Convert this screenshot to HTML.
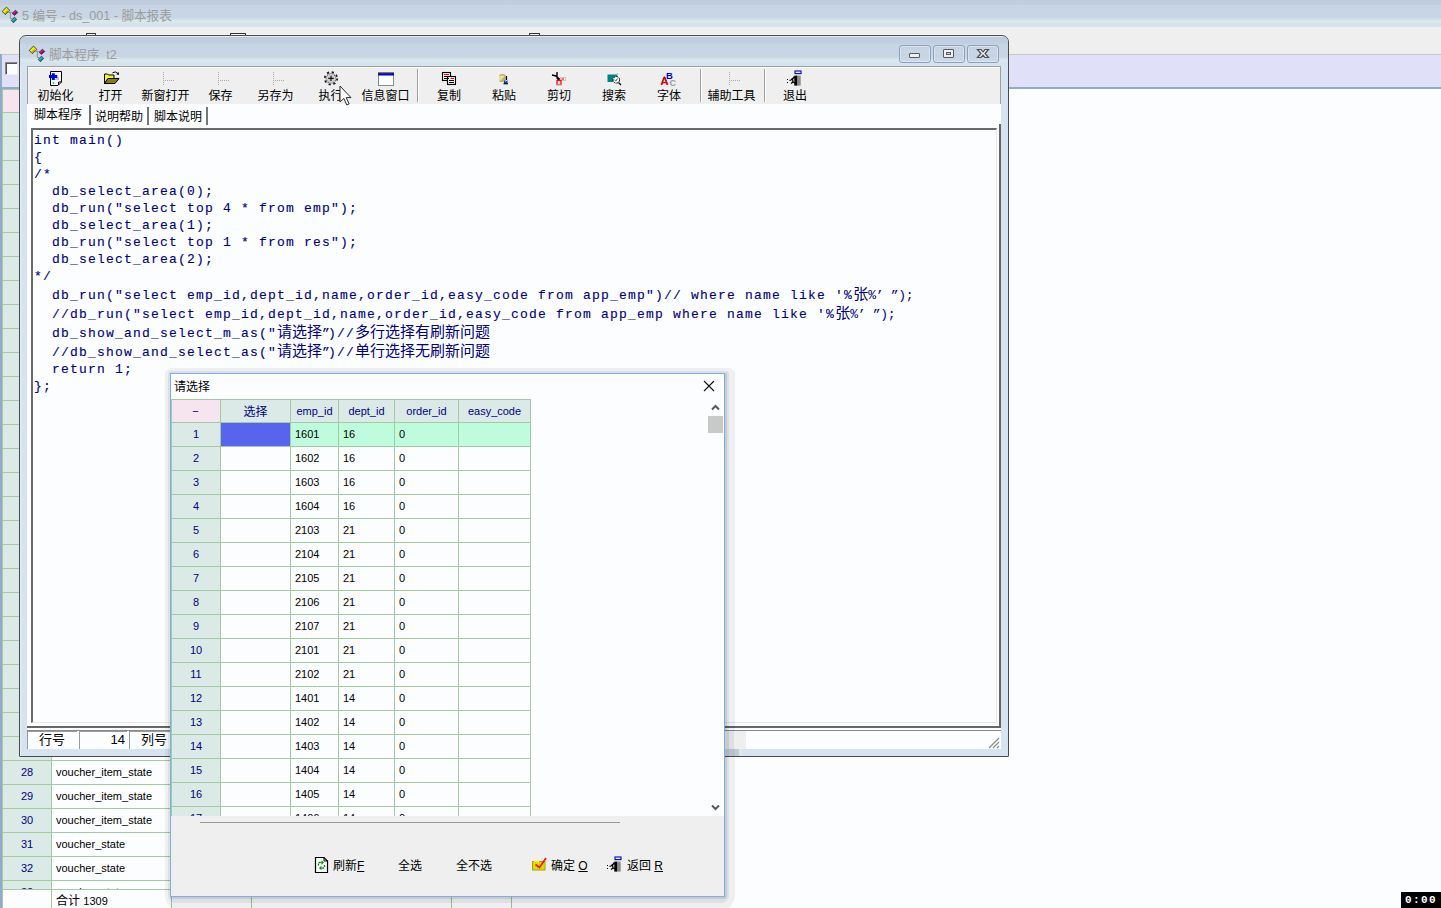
<!DOCTYPE html>
<html lang="zh"><head><meta charset="utf-8"><title>脚本报表</title>
<style>
*{box-sizing:border-box;margin:0;padding:0}
html,body{width:1441px;height:908px;overflow:hidden;background:#fcfdfe}
body{position:relative;font-family:"Liberation Sans","Noto Sans CJK SC",sans-serif;font-size:12px;color:#000}
.a{position:absolute}
.t{position:absolute;white-space:nowrap;line-height:14px;height:14px}
.c{text-align:center}
.nv{color:#000080}
.mono{font-family:"Liberation Mono","Noto Sans CJK SC",monospace}
.code{position:absolute;left:34px;white-space:pre;font-family:"Liberation Mono","Noto Sans CJK SC",monospace;font-size:13px;line-height:17px;height:17px;color:#000080;letter-spacing:1.2px;-webkit-text-stroke:0.12px #000080;margin-top:1px}
.cj{line-height:0;font-size:15px;letter-spacing:0;-webkit-text-stroke:0}
.sh{line-height:0;letter-spacing:-0.3px;-webkit-text-stroke:0}
.hl{position:absolute;height:1px;background:#a4caa2}
.vl{position:absolute;width:1px;background:#a4caa2}
.lat{font-size:11px}
</style></head><body>

<div class="a" id="mtitle" style="left:0;top:0;width:1441px;height:27px;background:linear-gradient(#bfcddd 0,#c1cedf 5px,#c8d5e4 5px,#c8d5e4 18px,#d0dceb 18px,#d0dceb 20px,#dbe8e8 20px,#dbe8e8 23px,#d5e2f0 23px)"></div>
<div class="t" style="left:22px;top:8px;font-size:12.6px;line-height:16px;height:16px;color:#9c9c9c">5 编号 - ds_001 - 脚本报表</div>
<svg class="a" style="left:0px;top:0px" width="24" height="24" viewBox="0 0 24 24"><path d="M8.5 12.4 H12.3 M10.4 12.4 V18.6 H12.2" stroke="#8e8e8e" stroke-width="1" fill="none"/><path d="M6.5 7.1 L9.8 10.4 L5.4 14.6 L2.2 11.4 Z" fill="#f4f000" stroke="#1a1a40" stroke-width=".8"/><path d="M7.3 10.2 L9.0 11.0 L5.6 14.0 L4.4 13.0 Z" fill="#b0a800"/><path d="M15.5 10.2 L17.8 12.5 L14.4 15.4 L12.1 13.3 Z" fill="#e800d8" stroke="#1a3a1a" stroke-width=".8"/><path d="M16.3 12.0 L17.2 12.6 L14.6 14.8 L13.6 13.9 Z" fill="#a00018"/><path d="M14.4 17.2 L16.7 19.4 L13.4 22.8 L11.3 20.5 Z" fill="#00d0d8" stroke="#3a1a1a" stroke-width=".8"/><path d="M15.2 19.0 L16.0 19.6 L13.6 22.0 L12.8 21.2 Z" fill="#008890"/></svg>
<div class="a" style="left:0;top:27px;width:1441px;height:27px;background:#eeefee"></div>
<div class="a" style="left:86px;top:33px;width:10px;height:2px;z-index:1;border:1px solid #333;border-bottom:none;border-radius:1px 1px 0 0;background:#f4f4f4"></div>
<div class="a" style="left:230px;top:33px;width:16px;height:2px;z-index:1;border:1px solid #333;border-bottom:none;border-radius:1px 1px 0 0;background:#f4f4f4"></div>
<div class="a" style="left:529px;top:33px;width:11px;height:2px;z-index:1;border:1px solid #333;border-bottom:none;border-radius:1px 1px 0 0;background:#f4f4f4"></div>
<div class="a" style="left:314px;top:34px;width:2px;height:1px;background:#333"></div>
<div class="a" style="left:0;top:54px;width:1441px;height:1px;background:#c6c6c6"></div>
<div class="a" style="left:0;top:55px;width:1441px;height:32px;background:#e0e0f8"></div>
<div class="a" style="left:0;top:87px;width:1441px;height:2px;background:#8fabce"></div>
<div class="a" style="left:0;top:54px;width:2px;height:854px;background:#90aacc"></div>
<div class="a" style="left:5px;top:62px;width:13px;height:13px;background:#fcfdfe;border:1px solid #888;border-right-color:#eee;border-bottom-color:#eee;box-shadow:inset 1px 1px 0 #555"></div>
<div class="a" style="left:2px;top:89px;width:49px;height:800px;background:#dbeae7"></div>
<div class="a" style="left:3px;top:90px;width:48px;height:22px;background:#f6e5ef"></div>
<div class="hl" style="left:3px;top:112px;width:509px"></div>
<div class="hl" style="left:3px;top:136px;width:509px"></div>
<div class="hl" style="left:3px;top:160px;width:509px"></div>
<div class="hl" style="left:3px;top:184px;width:509px"></div>
<div class="hl" style="left:3px;top:208px;width:509px"></div>
<div class="hl" style="left:3px;top:232px;width:509px"></div>
<div class="hl" style="left:3px;top:256px;width:509px"></div>
<div class="hl" style="left:3px;top:280px;width:509px"></div>
<div class="hl" style="left:3px;top:304px;width:509px"></div>
<div class="hl" style="left:3px;top:328px;width:509px"></div>
<div class="hl" style="left:3px;top:352px;width:509px"></div>
<div class="hl" style="left:3px;top:376px;width:509px"></div>
<div class="hl" style="left:3px;top:400px;width:509px"></div>
<div class="hl" style="left:3px;top:424px;width:509px"></div>
<div class="hl" style="left:3px;top:448px;width:509px"></div>
<div class="hl" style="left:3px;top:472px;width:509px"></div>
<div class="hl" style="left:3px;top:496px;width:509px"></div>
<div class="hl" style="left:3px;top:520px;width:509px"></div>
<div class="hl" style="left:3px;top:544px;width:509px"></div>
<div class="hl" style="left:3px;top:568px;width:509px"></div>
<div class="hl" style="left:3px;top:592px;width:509px"></div>
<div class="hl" style="left:3px;top:616px;width:509px"></div>
<div class="hl" style="left:3px;top:640px;width:509px"></div>
<div class="hl" style="left:3px;top:664px;width:509px"></div>
<div class="hl" style="left:3px;top:688px;width:509px"></div>
<div class="hl" style="left:3px;top:712px;width:509px"></div>
<div class="hl" style="left:3px;top:736px;width:509px"></div>
<div class="hl" style="left:3px;top:760px;width:509px"></div>
<div class="hl" style="left:3px;top:784px;width:509px"></div>
<div class="hl" style="left:3px;top:808px;width:509px"></div>
<div class="hl" style="left:3px;top:832px;width:509px"></div>
<div class="hl" style="left:3px;top:856px;width:509px"></div>
<div class="hl" style="left:3px;top:880px;width:509px"></div>
<div class="hl" style="left:2px;top:89px;width:510px"></div>
<div class="vl" style="left:2px;top:89px;height:819px"></div>
<div class="vl" style="left:51px;top:89px;height:819px"></div>
<div class="vl" style="left:171px;top:89px;height:819px"></div>
<div class="vl" style="left:251px;top:89px;height:819px"></div>
<div class="vl" style="left:451px;top:89px;height:819px"></div>
<div class="vl" style="left:511px;top:89px;height:819px"></div>
<div class="a" style="left:3px;top:890px;width:48px;height:18px;background:#fcfdfe"></div>
<div class="hl" style="left:3px;top:889px;width:509px"></div>
<div class="a" style="left:3px;top:761px;width:508px;height:23px;overflow:hidden"><div class="t c nv lat" style="left:0;top:4px;width:48px">28</div><div class="t lat" style="left:53px;top:4px">voucher_item_state</div></div>
<div class="a" style="left:3px;top:785px;width:508px;height:23px;overflow:hidden"><div class="t c nv lat" style="left:0;top:4px;width:48px">29</div><div class="t lat" style="left:53px;top:4px">voucher_item_state</div></div>
<div class="a" style="left:3px;top:809px;width:508px;height:23px;overflow:hidden"><div class="t c nv lat" style="left:0;top:4px;width:48px">30</div><div class="t lat" style="left:53px;top:4px">voucher_item_state</div></div>
<div class="a" style="left:3px;top:833px;width:508px;height:23px;overflow:hidden"><div class="t c nv lat" style="left:0;top:4px;width:48px">31</div><div class="t lat" style="left:53px;top:4px">voucher_state</div></div>
<div class="a" style="left:3px;top:857px;width:508px;height:23px;overflow:hidden"><div class="t c nv lat" style="left:0;top:4px;width:48px">32</div><div class="t lat" style="left:53px;top:4px">voucher_state</div></div>
<div class="a" style="left:3px;top:881px;width:508px;height:8px;overflow:hidden"><div class="t c nv lat" style="left:0;top:4px;width:48px">33</div><div class="t lat" style="left:53px;top:4px">voucher_state</div></div>
<div class="t" style="left:56px;top:894px">合计 <span class="lat">1309</span></div>
<div class="a" style="left:24px;top:34px;width:980px;height:1px;background:#f6f7f7"></div>
<div class="a" id="sw" style="left:19px;top:35px;width:990px;height:722px;border:1px solid #4b4b4b;border-radius:7px 7px 1px 1px;background:#d6e3f1;overflow:hidden;box-shadow:inset 1px 1px 0 #e9eef5">
<div class="a" style="left:0;top:1px;width:988px;height:29px;background:linear-gradient(#bccbdc 0,#c3d0df 7px,#c8d5e4 7px,#c8d5e4 20px,#d0dceb 20px,#d0dceb 22px,#dbe8e8 22px,#dbe8e8 25px,#d5e2f0 25px)"></div>
</div>
<div class="t" style="left:49px;top:47px;font-size:12.6px;line-height:16px;height:16px;color:#9c9c9c">脚本程序&nbsp; t2</div>
<svg class="a" style="left:27px;top:39px" width="24" height="24" viewBox="0 0 24 24"><path d="M8.5 12.4 H12.3 M10.4 12.4 V18.6 H12.2" stroke="#8e8e8e" stroke-width="1" fill="none"/><path d="M6.5 7.1 L9.8 10.4 L5.4 14.6 L2.2 11.4 Z" fill="#f4f000" stroke="#1a1a40" stroke-width=".8"/><path d="M7.3 10.2 L9.0 11.0 L5.6 14.0 L4.4 13.0 Z" fill="#b0a800"/><path d="M15.5 10.2 L17.8 12.5 L14.4 15.4 L12.1 13.3 Z" fill="#e800d8" stroke="#1a3a1a" stroke-width=".8"/><path d="M16.3 12.0 L17.2 12.6 L14.6 14.8 L13.6 13.9 Z" fill="#a00018"/><path d="M14.4 17.2 L16.7 19.4 L13.4 22.8 L11.3 20.5 Z" fill="#00d0d8" stroke="#3a1a1a" stroke-width=".8"/><path d="M15.2 19.0 L16.0 19.6 L13.6 22.0 L12.8 21.2 Z" fill="#008890"/></svg>
<div class="a" style="left:899px;top:45px;width:32px;height:18px;border:1px solid #8ea0bf;border-radius:3px;background:linear-gradient(#c4d2e2 0,#c9d6e5 50%,#c3d1e2 50%,#cddae8 100%);box-shadow:inset 0 0 0 1px rgba(255,255,255,.35)"></div>
<div class="a" style="left:933px;top:45px;width:32px;height:18px;border:1px solid #8ea0bf;border-radius:3px;background:linear-gradient(#c4d2e2 0,#c9d6e5 50%,#c3d1e2 50%,#cddae8 100%);box-shadow:inset 0 0 0 1px rgba(255,255,255,.35)"></div>
<div class="a" style="left:967px;top:45px;width:32px;height:18px;border:1px solid #8ea0bf;border-radius:3px;background:linear-gradient(#c4d2e2 0,#c9d6e5 50%,#c3d1e2 50%,#cddae8 100%);box-shadow:inset 0 0 0 1px rgba(255,255,255,.35)"></div>
<div class="a" style="left:909px;top:53px;width:11px;height:5px;border:1px solid #55585f;border-radius:1px;background:#f0f0f0"></div>
<div class="a" style="left:943px;top:49px;width:11px;height:9px;border:1px solid #55585f;border-radius:1px;background:#f0f0f0"></div>
<div class="a" style="left:946px;top:52px;width:5px;height:3px;border:1px solid #55585f;background:#c9d6e5"></div>
<svg class="a" style="left:976px;top:48px" width="14" height="11" viewBox="0 0 14 11"><path d="M1.5 1.5 L5 1.5 L7 3.8 L9 1.5 L12.5 1.5 L9 5.5 L12.5 9.5 L9 9.5 L7 7.2 L5 9.5 L1.5 9.5 L5 5.5 Z" fill="#f2f2f2" stroke="#4a4d55" stroke-width="1.2"/></svg>
<div class="a" style="left:27px;top:66px;width:974px;height:683px;background:#fcfdfe"></div>
<div class="a" style="left:27px;top:66px;width:974px;height:38px;background:#eeefee;border:1px solid #a0a0a0;border-bottom:none;box-shadow:inset 0 1px 0 #fcfcfc"></div>
<div class="t c" style="left:15.5px;top:89px;width:80px">初始化</div>
<div class="t c" style="left:70.5px;top:89px;width:80px">打开</div>
<div class="t c" style="left:125.5px;top:89px;width:80px">新窗打开</div>
<div class="t c" style="left:180.5px;top:89px;width:80px">保存</div>
<div class="t c" style="left:235.5px;top:89px;width:80px">另存为</div>
<div class="t c" style="left:290.5px;top:89px;width:80px">执行</div>
<div class="t c" style="left:345.5px;top:89px;width:80px">信息窗口</div>
<div class="t c" style="left:409px;top:89px;width:80px">复制</div>
<div class="t c" style="left:464px;top:89px;width:80px">粘贴</div>
<div class="t c" style="left:519px;top:89px;width:80px">剪切</div>
<div class="t c" style="left:574px;top:89px;width:80px">搜索</div>
<div class="t c" style="left:629px;top:89px;width:80px">字体</div>
<div class="t c" style="left:691.5px;top:89px;width:80px">辅助工具</div>
<div class="t c" style="left:755px;top:89px;width:80px">退出</div>
<svg class="a" style="left:48px;top:70px" width="16" height="17" viewBox="0 0 16 17"><path d="M2.5 1.5 H13.5 V12 L10 15.5 H2.5 Z" fill="#fff" stroke="#000" stroke-width="1"/><path d="M13.5 12 H10.5 V15" fill="none" stroke="#000" stroke-width="1"/><path d="M8 7 H11 V10 H7 V9 H8 Z" fill="#c4c4c4"/><path d="M1 5 H9.3 V8 H1 Z M3.8 3.3 H6.8 V10 H3.8 Z" fill="#0000f0"/><rect x="4.6" y="12.2" width="1.7" height="1.7" fill="#00e020"/></svg>
<svg class="a" style="left:103px;top:70px" width="17" height="16" viewBox="0 0 17 16"><path d="M1.5 13.5 V4 H4.5 L5.5 5 H11 V8.5 H5 Z" fill="#f8f430" stroke="#000" stroke-width="1"/><path d="M1.5 13.5 L5 8.5 H16 L12 13.5 Z" fill="#848200" stroke="#000" stroke-width="1"/><path d="M9.5 2.8 Q12.5 0.6 15 3.6" fill="none" stroke="#000" stroke-width="1"/><path d="M13.4 4.6 L16 4.8 L15.8 2 Z" fill="#000"/></svg>
<svg class="a" style="left:323px;top:70px" width="16" height="17" viewBox="0 0 16 17"><circle cx="8" cy="8.4" r="6.2" fill="none" stroke="#1a1a1a" stroke-width="1.8" stroke-dasharray="2.2 2.67"/><circle cx="8" cy="8.4" r="4.9" fill="#cfcfcf" stroke="#555" stroke-width="1.2" stroke-dasharray="1 1"/><path d="M5.3 8.4 H10.7 M8 5.7 V11.1" stroke="#111" stroke-width="1.2"/></svg>
<svg class="a" style="left:378px;top:72px" width="16" height="14" viewBox="0 0 16 14"><rect x="0.5" y="1.5" width="15" height="12" fill="#fcfdfe" stroke="#8a8a8a" stroke-width="1"/><rect x="0" y="0.5" width="16" height="1" fill="#000"/><rect x="0" y="1.5" width="16" height="2" fill="#0000d8"/></svg>
<svg class="a" style="left:441px;top:71px" width="16" height="15" viewBox="0 0 16 15"><rect x="0" y="0" width="11" height="11" fill="#fff"/><rect x="5" y="4" width="11" height="11" fill="#fff"/><rect x="1.5" y="1.5" width="8" height="8" fill="#fff" stroke="#000" stroke-width="1.2"/><rect x="6.5" y="5.5" width="8" height="8" fill="#fff" stroke="#000" stroke-width="1.2"/><path d="M3 3.5 H8" stroke="#f00" stroke-width="1"/><path d="M3 5.5 H8 M3 7.5 H8" stroke="#000" stroke-width="1"/><path d="M9.5 7.5 H13" stroke="#f00" stroke-width="1"/><path d="M8 9.5 H13 M8 11.5 H13" stroke="#000" stroke-width="1"/></svg>
<svg class="a" style="left:498px;top:74px" width="11" height="11" viewBox="0 0 11 11"><rect x="1" y="1" width="7" height="7" fill="#e4e0a8"/><path d="M1 8 L8 1 V8 Z" fill="#b8b470"/><path d="M1.5 1.5 L4.5 0.5 L7.5 1.5" stroke="#c8a020" stroke-width="1.2" fill="none"/><path d="M8.5 2 V6" stroke="#000" stroke-width="1.2"/><path d="M6 6 L7.5 8 L9.5 6 V9 H6 Z" fill="#0030f0"/><path d="M5.5 9.7 H10" stroke="#000" stroke-width="1.2"/></svg>
<svg class="a" style="left:551px;top:71px" width="16" height="15" viewBox="0 0 16 15"><path d="M6 1 V7 L7.5 9 M1 4 L5 5 L9 8.5" stroke="#000" stroke-width="1.4" fill="none"/><rect x="9.5" y="6.5" width="5" height="3" fill="#fff" stroke="#c8c8c8" stroke-width="1"/><path d="M10.5 8 H13" stroke="#f00" stroke-width="1.2"/><rect x="6" y="9.5" width="4" height="4" fill="#fff" stroke="#f00" stroke-width="1.3"/><path d="M5.5 13.8 H10.5" stroke="#b0b0b0" stroke-width="1"/></svg>
<svg class="a" style="left:606px;top:72px" width="16" height="14" viewBox="0 0 16 14"><rect x="1.5" y="2.5" width="9.5" height="7.5" fill="#008284"/><path d="M11.5 1 V4" stroke="#c0c0c0" stroke-width="1.2"/><circle cx="10.3" cy="7.8" r="3.3" fill="#f4f4f4" stroke="#000" stroke-width="1" stroke-dasharray="2 1"/><path d="M8.5 8 L9.8 9 L11.5 6.5" stroke="#008284" stroke-width="1" fill="none"/><path d="M12.5 10.5 L15 13" stroke="#000" stroke-width="1.3"/></svg>
<svg class="a" style="left:660px;top:70px" width="18" height="17" viewBox="0 0 18 17"><text x="0.5" y="14.5" font-family="Liberation Sans,sans-serif" font-size="11" font-weight="bold" fill="#e00000">A</text><path d="M1 14 L4.5 6.5 L8 14" stroke="#000" stroke-width=".6" fill="none" stroke-dasharray="1 1"/><text x="6" y="8.5" font-family="Liberation Sans,sans-serif" font-size="9.5" font-weight="bold" fill="#0000f0">B</text><text x="9.5" y="16" font-family="Liberation Sans,sans-serif" font-size="9" font-weight="bold" fill="#9a9a9a">C</text></svg>
<svg class="a" style="left:786px;top:70px" width="16" height="16" viewBox="0 0 16 16"><rect x="9" y="1" width="6" height="2.6" fill="none" stroke="#0000c0" stroke-width="1.1"/><rect x="8.3" y="5.6" width="3.2" height="10" fill="#000"/><rect x="11.5" y="5.6" width="3.2" height="10" fill="#8a8a8a"/><path d="M8.5 7.5 L6.5 8.5 L5 10 L3.5 10.5 M6.5 9 L7 12 L5 13.5 M7 12 L9 13" stroke="#000" stroke-width="1.3" fill="none"/><rect x="7" y="6.6" width="1.8" height="1.8" fill="#000"/><path d="M1 9.5 H3 M1 12.5 H3" stroke="#000" stroke-width="1" stroke-dasharray="1 1"/></svg>
<div class="a" style="left:163px;top:72px;width:1px;height:14px;background:repeating-linear-gradient(#a8a8a8 0 1px,transparent 1px 2px)"></div><div class="a" style="left:163px;top:80px;width:12px;height:1px;background:repeating-linear-gradient(90deg,#a8a8a8 0 1px,transparent 1px 2px)"></div>
<div class="a" style="left:218px;top:72px;width:1px;height:14px;background:repeating-linear-gradient(#a8a8a8 0 1px,transparent 1px 2px)"></div><div class="a" style="left:218px;top:80px;width:12px;height:1px;background:repeating-linear-gradient(90deg,#a8a8a8 0 1px,transparent 1px 2px)"></div>
<div class="a" style="left:273px;top:72px;width:1px;height:14px;background:repeating-linear-gradient(#a8a8a8 0 1px,transparent 1px 2px)"></div><div class="a" style="left:273px;top:80px;width:12px;height:1px;background:repeating-linear-gradient(90deg,#a8a8a8 0 1px,transparent 1px 2px)"></div>
<div class="a" style="left:729px;top:72px;width:1px;height:14px;background:repeating-linear-gradient(#a8a8a8 0 1px,transparent 1px 2px)"></div><div class="a" style="left:729px;top:80px;width:12px;height:1px;background:repeating-linear-gradient(90deg,#a8a8a8 0 1px,transparent 1px 2px)"></div>
<div class="a" style="left:417px;top:69px;width:1px;height:33px;background:#a0a0a0"></div><div class="a" style="left:418px;top:69px;width:1px;height:33px;background:#fff"></div>
<div class="a" style="left:700px;top:69px;width:1px;height:33px;background:#a0a0a0"></div><div class="a" style="left:701px;top:69px;width:1px;height:33px;background:#fff"></div>
<div class="a" style="left:764px;top:69px;width:1px;height:33px;background:#a0a0a0"></div><div class="a" style="left:765px;top:69px;width:1px;height:33px;background:#fff"></div>
<div class="t" style="left:34px;top:108px">脚本程序</div>
<div class="a" style="left:89px;top:105px;width:2px;height:20px;background:#6e6e6e"></div>
<div class="t" style="left:95px;top:110px">说明帮助</div>
<div class="a" style="left:147px;top:107px;width:2px;height:18px;background:#777"></div>
<div class="t" style="left:154px;top:110px">脚本说明</div>
<div class="a" style="left:206px;top:107px;width:2px;height:18px;background:#777"></div>
<div class="a" style="left:31px;top:128px;width:966px;height:595px;border:2px solid #6b6b6b;border-right:1px solid #e6e6e6;border-bottom:1px solid #e6e6e6;background:#fcfdfe"></div>
<div class="a" style="left:999px;top:124px;width:2px;height:604px;background:#666"></div>
<div class="a" style="left:27px;top:726px;width:974px;height:2px;background:#666"></div>
<div class="code" style="top:131px">int main()</div>
<div class="code" style="top:148px">{</div>
<div class="code" style="top:165px">/*</div>
<div class="code" style="top:182px">  db_select_area(0);</div>
<div class="code" style="top:199px">  db_run("select top 4 * from emp");</div>
<div class="code" style="top:216px">  db_select_area(1);</div>
<div class="code" style="top:233px">  db_run("select top 1 * from res");</div>
<div class="code" style="top:250px">  db_select_area(2);</div>
<div class="code" style="top:267px">*/</div>
<div class="code" style="top:286px">  db_run("select emp_id,dept_id,name,order_id,easy_code from app_emp")// where name like '%<span class="cj">张</span><span class="sh">%’ ”);</span></div>
<div class="code" style="top:305px">  //db_run("select emp_id,dept_id,name,order_id,easy_code from app_emp where name like '%<span class="cj">张</span><span class="sh">%’ ”);</span></div>
<div class="code" style="top:324px">  db_show_and_select_m_as("<span class="cj">请选择</span><span style="letter-spacing:-2px">”</span>)//<span class="cj">多行选择有刷新问题</span></div>
<div class="code" style="top:343px">  //db_show_and_select_as("<span class="cj">请选择</span><span style="letter-spacing:-2px">”</span>)//<span class="cj">单行选择无刷新问题</span></div>
<div class="code" style="top:360px">  return 1;</div>
<div class="code" style="top:377px">};</div>
<svg class="a" style="left:339px;top:85px" width="14" height="22" viewBox="0 0 14 22"><path d="M1 1 V17 L4.8 13.4 L7.8 20 L10.2 18.9 L7.2 12.6 H12 Z" fill="#fdfdfd" stroke="#2a2a2a" stroke-width="1" stroke-linejoin="miter"/></svg>
<div class="a" style="left:27px;top:730px;width:974px;height:1px;background:#8a8a8a"></div>
<div class="a" style="left:27px;top:731px;width:50px;height:18px;border-top:1px solid #9a9a9a;border-left:1px solid #9a9a9a;background:#fcfdfe"></div>
<div class="a" style="left:79px;top:731px;width:48px;height:18px;border-top:1px solid #9a9a9a;border-left:1px solid #9a9a9a;background:#fcfdfe"></div>
<div class="a" style="left:129px;top:731px;width:60px;height:18px;border-top:1px solid #9a9a9a;border-left:1px solid #9a9a9a;background:#fcfdfe"></div>
<div class="t c" style="left:27px;top:733px;width:50px;font-size:13px">行号</div>
<div class="t" style="left:79px;top:733px;width:46px;text-align:right;font-size:13px">14</div>
<div class="t" style="left:141px;top:733px;font-size:13px">列号</div>
<svg class="a" style="left:988px;top:737px" width="12" height="12" viewBox="0 0 12 12"><path d="M11 1 L1 11 M11 5 L5 11 M11 9 L9 11" stroke="#8a8a8a" stroke-width="1.2" fill="none"/></svg>
<div class="a" style="left:735px;top:731px;width:11px;height:18px;background:#eeefee"></div>
<div class="a" style="left:165px;top:368px;width:570px;height:543px;border-radius:6px 6px 16px 16px;background:rgba(0,0,0,.055)"></div>
<div class="a" style="left:168px;top:371px;width:561px;height:532px;border-radius:3px 3px 8px 8px;background:rgba(0,0,0,.067)"></div>
<div class="a" style="left:170px;top:373px;width:557px;height:526px;border-radius:1px 1px 3px 3px;background:rgba(0,0,0,.09)"></div>
<div class="a" style="left:727px;top:731px;width:2px;height:25px;background:rgba(0,0,0,.09)"></div>
<div class="a" style="left:729px;top:731px;width:5px;height:18px;background:rgba(0,0,0,.067)"></div>
<div class="a" style="left:729px;top:749px;width:10px;height:7px;background:rgba(0,0,0,.1)"></div>
<div class="a" style="left:739px;top:749px;width:4px;height:7px;background:#dbe8e8"></div>
<div class="a" id="dlg" style="left:170px;top:373px;width:555px;height:524px;border:1px solid #76b0f0;background:#fcfdfe"></div>
<div class="a" style="left:171px;top:816px;width:553px;height:80px;background:#eeefee"></div>
<div class="t" style="left:174px;top:380px">请选择</div>
<svg class="a" style="left:703px;top:380px" width="12" height="12" viewBox="0 0 12 12"><path d="M1 1 L11 11 M11 1 L1 11" stroke="#111" stroke-width="1.1" fill="none"/></svg>
<div class="a" style="left:171px;top:374px;width:553px;height:442px;overflow:hidden">
<div class="a" style="left:0;top:25px;width:49px;height:417px;background:#dbeae7"></div>
<div class="a" style="left:0;top:25px;width:360px;height:24px;background:#dbeae7"></div>
<div class="a" style="left:0;top:26px;width:49px;height:22px;background:#f6e5ef"></div>
<div class="a" style="left:50px;top:49px;width:309px;height:23px;background:#bffcde"></div>
<div class="a" style="left:50px;top:49px;width:69px;height:23px;background:#5765ee"></div>
<div class="hl" style="left:0;top:25px;width:360px"></div>
<div class="hl" style="left:0;top:48px;width:360px"></div>
<div class="hl" style="left:0;top:72px;width:360px"></div>
<div class="hl" style="left:0;top:96px;width:360px"></div>
<div class="hl" style="left:0;top:120px;width:360px"></div>
<div class="hl" style="left:0;top:144px;width:360px"></div>
<div class="hl" style="left:0;top:168px;width:360px"></div>
<div class="hl" style="left:0;top:192px;width:360px"></div>
<div class="hl" style="left:0;top:216px;width:360px"></div>
<div class="hl" style="left:0;top:240px;width:360px"></div>
<div class="hl" style="left:0;top:264px;width:360px"></div>
<div class="hl" style="left:0;top:288px;width:360px"></div>
<div class="hl" style="left:0;top:312px;width:360px"></div>
<div class="hl" style="left:0;top:336px;width:360px"></div>
<div class="hl" style="left:0;top:360px;width:360px"></div>
<div class="hl" style="left:0;top:384px;width:360px"></div>
<div class="hl" style="left:0;top:408px;width:360px"></div>
<div class="hl" style="left:0;top:432px;width:360px"></div>
<div class="hl" style="left:0;top:456px;width:360px"></div>
<div class="vl" style="left:0px;top:25px;height:420px"></div>
<div class="vl" style="left:49px;top:25px;height:420px"></div>
<div class="vl" style="left:119px;top:25px;height:420px"></div>
<div class="vl" style="left:167px;top:25px;height:420px"></div>
<div class="vl" style="left:223px;top:25px;height:420px"></div>
<div class="vl" style="left:287px;top:25px;height:420px"></div>
<div class="vl" style="left:359px;top:25px;height:420px"></div>
<div class="t c nv lat" style="left:-15.5px;top:30px;width:80px">−</div>
<div class="t c nv" style="left:44.5px;top:31px;width:80px">选择</div>
<div class="t c nv lat" style="left:103.5px;top:30px;width:80px">emp_id</div>
<div class="t c nv lat" style="left:155.5px;top:30px;width:80px">dept_id</div>
<div class="t c nv lat" style="left:215.5px;top:30px;width:80px">order_id</div>
<div class="t c nv lat" style="left:283.5px;top:30px;width:80px">easy_code</div>
<div class="t c nv lat" style="left:0;top:53px;width:50px">1</div>
<div class="t lat" style="left:124px;top:53px">1601</div>
<div class="t lat" style="left:172px;top:53px">16</div>
<div class="t lat" style="left:228px;top:53px">0</div>
<div class="t c nv lat" style="left:0;top:77px;width:50px">2</div>
<div class="t lat" style="left:124px;top:77px">1602</div>
<div class="t lat" style="left:172px;top:77px">16</div>
<div class="t lat" style="left:228px;top:77px">0</div>
<div class="t c nv lat" style="left:0;top:101px;width:50px">3</div>
<div class="t lat" style="left:124px;top:101px">1603</div>
<div class="t lat" style="left:172px;top:101px">16</div>
<div class="t lat" style="left:228px;top:101px">0</div>
<div class="t c nv lat" style="left:0;top:125px;width:50px">4</div>
<div class="t lat" style="left:124px;top:125px">1604</div>
<div class="t lat" style="left:172px;top:125px">16</div>
<div class="t lat" style="left:228px;top:125px">0</div>
<div class="t c nv lat" style="left:0;top:149px;width:50px">5</div>
<div class="t lat" style="left:124px;top:149px">2103</div>
<div class="t lat" style="left:172px;top:149px">21</div>
<div class="t lat" style="left:228px;top:149px">0</div>
<div class="t c nv lat" style="left:0;top:173px;width:50px">6</div>
<div class="t lat" style="left:124px;top:173px">2104</div>
<div class="t lat" style="left:172px;top:173px">21</div>
<div class="t lat" style="left:228px;top:173px">0</div>
<div class="t c nv lat" style="left:0;top:197px;width:50px">7</div>
<div class="t lat" style="left:124px;top:197px">2105</div>
<div class="t lat" style="left:172px;top:197px">21</div>
<div class="t lat" style="left:228px;top:197px">0</div>
<div class="t c nv lat" style="left:0;top:221px;width:50px">8</div>
<div class="t lat" style="left:124px;top:221px">2106</div>
<div class="t lat" style="left:172px;top:221px">21</div>
<div class="t lat" style="left:228px;top:221px">0</div>
<div class="t c nv lat" style="left:0;top:245px;width:50px">9</div>
<div class="t lat" style="left:124px;top:245px">2107</div>
<div class="t lat" style="left:172px;top:245px">21</div>
<div class="t lat" style="left:228px;top:245px">0</div>
<div class="t c nv lat" style="left:0;top:269px;width:50px">10</div>
<div class="t lat" style="left:124px;top:269px">2101</div>
<div class="t lat" style="left:172px;top:269px">21</div>
<div class="t lat" style="left:228px;top:269px">0</div>
<div class="t c nv lat" style="left:0;top:293px;width:50px">11</div>
<div class="t lat" style="left:124px;top:293px">2102</div>
<div class="t lat" style="left:172px;top:293px">21</div>
<div class="t lat" style="left:228px;top:293px">0</div>
<div class="t c nv lat" style="left:0;top:317px;width:50px">12</div>
<div class="t lat" style="left:124px;top:317px">1401</div>
<div class="t lat" style="left:172px;top:317px">14</div>
<div class="t lat" style="left:228px;top:317px">0</div>
<div class="t c nv lat" style="left:0;top:341px;width:50px">13</div>
<div class="t lat" style="left:124px;top:341px">1402</div>
<div class="t lat" style="left:172px;top:341px">14</div>
<div class="t lat" style="left:228px;top:341px">0</div>
<div class="t c nv lat" style="left:0;top:365px;width:50px">14</div>
<div class="t lat" style="left:124px;top:365px">1403</div>
<div class="t lat" style="left:172px;top:365px">14</div>
<div class="t lat" style="left:228px;top:365px">0</div>
<div class="t c nv lat" style="left:0;top:389px;width:50px">15</div>
<div class="t lat" style="left:124px;top:389px">1404</div>
<div class="t lat" style="left:172px;top:389px">14</div>
<div class="t lat" style="left:228px;top:389px">0</div>
<div class="t c nv lat" style="left:0;top:413px;width:50px">16</div>
<div class="t lat" style="left:124px;top:413px">1405</div>
<div class="t lat" style="left:172px;top:413px">14</div>
<div class="t lat" style="left:228px;top:413px">0</div>
<div class="t c nv lat" style="left:0;top:437px;width:50px">17</div>
<div class="t lat" style="left:124px;top:437px">1406</div>
<div class="t lat" style="left:172px;top:437px">14</div>
<div class="t lat" style="left:228px;top:437px">0</div>
</div>
<div class="a" style="left:708px;top:416px;width:15px;height:17px;background:#c8c9c9"></div>
<svg class="a" style="left:711px;top:404px" width="9" height="7" viewBox="0 0 9 7"><path d="M1 5.5 L4.5 2 L8 5.5" stroke="#5a5a5a" stroke-width="2" fill="none"/></svg>
<svg class="a" style="left:711px;top:804px" width="9" height="7" viewBox="0 0 9 7"><path d="M1 1.5 L4.5 5 L8 1.5" stroke="#5a5a5a" stroke-width="2" fill="none"/></svg>
<div class="a" style="left:200px;top:822px;width:420px;height:1px;background:#9a9a9a"></div>
<svg class="a" style="left:314px;top:856px" width="15" height="18" viewBox="0 0 15 18"><path d="M1.5 1.5 H10 L13.5 5 V16.5 H1.5 Z" fill="#fcfdfe" stroke="#000" stroke-width="1.2"/><path d="M10 1.5 V5 H13.5" fill="none" stroke="#000" stroke-width="1"/><path d="M4.5 9.5 V7.5 Q4.5 6.5 5.5 6.5 H8" fill="none" stroke="#0a8a0a" stroke-width="1.3" stroke-dasharray="2 .7"/><path d="M7.5 4.2 L10 6.5 L7.5 8.8 Z" fill="#0a8a0a"/><path d="M10.5 9 V11 Q10.5 12 9.5 12 H7" fill="none" stroke="#0a8a0a" stroke-width="1.3" stroke-dasharray="2 .7"/><path d="M7.5 9.7 L5 12 L7.5 14.3 Z" fill="#0a8a0a"/></svg>
<svg class="a" style="left:531px;top:856px" width="17" height="16" viewBox="0 0 17 16"><rect x="1.5" y="5.5" width="12.5" height="8.5" fill="#e8e400" stroke="#a8a400" stroke-width="1"/><path d="M2 6 H14 M2 8 H14 M2 10 H14 M2 12 H14" stroke="#b8b400" stroke-width=".7" stroke-dasharray="1 1"/><rect x="3" y="4.5" width="5" height="1.5" fill="#f8f430"/><path d="M4.5 8.5 L8.5 11.5 L15 2" fill="none" stroke="#f01010" stroke-width="1.6"/></svg>
<svg class="a" style="left:606px;top:856px" width="16" height="16" viewBox="0 0 16 16"><rect x="9" y="1" width="6" height="2.6" fill="none" stroke="#0000c0" stroke-width="1.1"/><rect x="8.3" y="5.6" width="3.2" height="10" fill="#000"/><rect x="11.5" y="5.6" width="3.2" height="10" fill="#8a8a8a"/><path d="M8.5 7.5 L6.5 8.5 L5 10 L3.5 10.5 M6.5 9 L7 12 L5 13.5 M7 12 L9 13" stroke="#000" stroke-width="1.3" fill="none"/><rect x="7" y="6.6" width="1.8" height="1.8" fill="#000"/><path d="M1 9.5 H3 M1 12.5 H3" stroke="#000" stroke-width="1" stroke-dasharray="1 1"/></svg>
<div class="t" style="left:333px;top:859px">刷新<u class="lat" style="font-size:12px">F</u></div>
<div class="t" style="left:398px;top:859px">全选</div>
<div class="t" style="left:456px;top:859px">全不选</div>
<div class="t" style="left:551px;top:859px">确定 <u>O</u></div>
<div class="t" style="left:627px;top:859px">返回 <u>R</u></div>
<div class="a" style="left:1401px;top:892px;width:40px;height:16px;background:#000"></div>
<div class="t mono" style="left:1405px;top:893px;font-size:11px;line-height:15px;height:15px;font-weight:bold;color:#fff;letter-spacing:1.4px">0:00</div>
</body></html>
